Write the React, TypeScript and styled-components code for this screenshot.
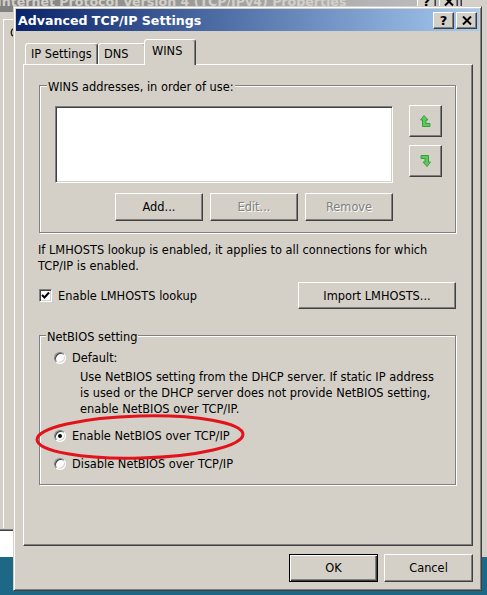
import React from "react";
import styled, { createGlobalStyle, css } from "styled-components";

const FONT = `"DejaVu Sans", Verdana, sans-serif`;

const Global = createGlobalStyle`
  html, body { margin: 0; padding: 0; background: #1d6787; }
  body { font-family: ${FONT}; font-size: 11.4px; color: #000; }
  * { box-sizing: border-box; }
`;

const Desktop = styled.div`
  position: relative;
  width: 487px;
  height: 595px;
  overflow: hidden;
  background: linear-gradient(#d4d0c8 0 557px, #1d6787 557px);
`;

const raised = css`
  border: 1px solid;
  border-color: #d4d0c8 #404040 #404040 #d4d0c8;
  box-shadow: inset 1px 1px #fff, inset -1px -1px #808080;
`;

const BackWindow = styled.div`
  position: absolute;
  left: -6px;
  top: -13px;
  width: 468px;
  height: 544px;
  background: #d4d0c8;
  ${raised};
  padding: 2px;
  display: flex;
  flex-direction: column;
`;

const BackTitle = styled.div`
  height: 22px;
  flex: none;
  background: linear-gradient(to right, #808080, #c0c0c0);
  color: #d4d0c8;
  font-weight: bold;
  font-size: 12.6px;
  display: flex;
  align-items: center;
  white-space: nowrap;
`;

const BackPanel = styled.div`
  flex: 1;
  margin: 7px 0 0 6px;
  border-top: 1px solid #fff;
  border-left: 1px solid #fff;
  padding: 6px 0 0 6px;
  color: #000;
`;

const BackStrip = styled.div`
  position: absolute;
  left: 0;
  top: 531px;
  width: 20px;
  height: 26px;
  background: #fff;
`;

const Dialog = styled.div`
  position: absolute;
  left: 13px;
  top: 6px;
  width: 469px;
  height: 585px;
  background: #d4d0c8;
  ${raised};
  padding: 2px;
  display: flex;
  flex-direction: column;
`;

const TitleBar = styled.div`
  height: 22px;
  flex: none;
  background: linear-gradient(to right, #0a246a, #a6caf0);
  display: flex;
  align-items: center;
  padding: 0 2px 0 2px;
`;

const TitleText = styled.span`
  color: #fff;
  font-weight: bold;
  font-size: 12.6px;
  white-space: nowrap;
`;

const CapButtons = styled.div<{ $gap?: number }>`
  margin-left: auto;
  display: flex;
  gap: ${(p) => p.$gap ?? 2}px;
`;

const CapBtn = styled.div<{ $w?: number; $h?: number }>`
  width: ${(p) => p.$w ?? 21}px;
  height: ${(p) => p.$h ?? 17}px;
  background: #d4d0c8;
  border: 1px solid;
  border-color: #fff #404040 #404040 #fff;
  box-shadow: inset -1px -1px #808080;
  display: flex;
  align-items: center;
  justify-content: center;
  font-weight: bold;
  font-size: 13px;
  color: #000;
  line-height: 1;
`;

const Body = styled.div`
  flex: 1;
  display: flex;
  flex-direction: column;
  padding: 9px 6px 0 7px;
`;

const TabRow = styled.div`
  height: 24px;
  display: flex;
  align-items: flex-end;
  padding-left: 2px;
`;

const Tab = styled.div<{ $w: number; $active?: boolean }>`
  position: relative;
  width: ${(p) => p.$w}px;
  height: 21px;
  background: #d4d0c8;
  border: 1px solid;
  border-bottom: none;
  border-color: #fff #404040 transparent #fff;
  border-radius: 3px 3px 0 0;
  box-shadow: inset -1px 0 #808080;
  padding: 3px 0 0 5px;
  line-height: 15px;
  white-space: nowrap;
  ${(p) =>
    p.$active &&
    css`
      width: ${p.$w + 4}px;
      height: 26px;
      margin: 0 -2px -1px;
      padding: 4px 0 0 7px;
      line-height: 14px;
      z-index: 1;
    `}
`;

const Panel = styled.div`
  position: relative;
  width: 450px;
  height: 482px;
  flex: none;
  border: 1px solid;
  border-color: #fff #404040 #404040 #fff;
  box-shadow: inset -1px -1px #808080;
  padding: 11px 16px 0 15px;
  display: flex;
  flex-direction: column;
`;

const Group = styled.fieldset<{ $pad: string }>`
  margin: 0;
  min-width: 0;
  padding: ${(p) => p.$pad};
  border: 1px solid #808080;
  box-shadow: inset 1px 1px #fff, 1px 1px #fff;
`;

const Legend = styled.legend`
  margin-left: -8px;
  padding: 4px 1px 0;
  line-height: 14px;
  background: #d4d0c8;
  white-space: nowrap;
`;

const ListRow = styled.div`
  display: flex;
  gap: 16px;
  align-items: flex-start;
`;

const ListBox = styled.div`
  width: 338px;
  height: 77px;
  background: #fff;
  border: 1px solid;
  border-color: #808080 #fff #fff #808080;
  box-shadow: inset 1px 1px #404040, inset -1px -1px #d4d0c8;
`;

const ArrowCol = styled.div`
  display: flex;
  flex-direction: column;
  gap: 8px;
  margin-top: -1px;
`;

const Btn = styled.button<{ $w: number; $h?: number; $default?: boolean }>`
  width: ${(p) => p.$w}px;
  height: ${(p) => p.$h ?? 28}px;
  flex: none;
  font: inherit;
  color: #000;
  background: #d4d0c8;
  padding: 0;
  display: flex;
  align-items: center;
  justify-content: center;
  border: 1px solid;
  border-color: #fff #404040 #404040 #fff;
  box-shadow: inset -1px -1px #808080;
  white-space: nowrap;
  ${(p) =>
    p.$default &&
    css`
      border-color: #000;
      box-shadow: inset 1px 1px #fff, inset -1px -1px #404040, inset -2px -2px #808080;
    `}
  &:disabled {
    color: #808080;
    text-shadow: 1px 1px #fff;
  }
`;

const BtnRow = styled.div`
  width: 338px;
  margin-top: 10px;
  display: flex;
  justify-content: flex-end;
  gap: 7px;
`;

const Info = styled.div`
  margin: 9px 0 0 -1px;
  line-height: 16px;
  white-space: nowrap;
`;

const CheckRow = styled.div`
  margin-top: 8px;
  height: 27px;
  display: flex;
  align-items: center;
  justify-content: space-between;
`;

const CheckLabel = styled.label`
  display: flex;
  align-items: center;
  gap: 6px;
`;

const CheckBox = styled.span`
  width: 13px;
  height: 13px;
  flex: none;
  background: #fff;
  border: 1px solid;
  border-color: #808080 #fff #fff #808080;
  box-shadow: inset 1px 1px #404040, inset -1px -1px #d4d0c8;
  display: flex;
  align-items: center;
  justify-content: center;
`;

const NetGroupWrap = styled.div`
  margin-top: 17px;
`;

const RadioRow = styled.div<{ $mt?: number }>`
  height: 16px;
  margin-top: ${(p) => p.$mt ?? 0}px;
  display: flex;
  align-items: center;
  gap: 6px;
  white-space: nowrap;
`;

const Radio = styled.span<{ $on?: boolean }>`
  position: relative;
  width: 12px;
  height: 12px;
  flex: none;
  border-radius: 50%;
  background: #fff;
  border: 1px solid;
  border-color: #808080 #fff #fff #808080;
  box-shadow: inset 1px 1px #404040, inset -1px -1px #d4d0c8;
  ${(p) =>
    p.$on &&
    css`
      &::after {
        content: "";
        position: absolute;
        left: 3px;
        top: 3px;
        width: 4px;
        height: 4px;
        border-radius: 50%;
        background: #000;
      }
    `}
`;

const Desc = styled.div`
  margin: 3px 0 0 26px;
  line-height: 16px;
  white-space: nowrap;
`;

const Ellipse = styled.svg`
  position: absolute;
  left: 9px;
  top: 347px;
  overflow: visible;
  pointer-events: none;
`;

const Footer = styled.div`
  margin-top: 8px;
  display: flex;
  justify-content: flex-end;
  gap: 6px;
`;

const UpIcon = ({ flip }: { flip?: boolean }) => (
  <svg width="11" height="12" viewBox="0 0 11 12" style={flip ? { transform: "rotate(180deg)" } : undefined}>
    <polygon
      points="4,0.5 8,5 6,5 6,8.5 10,8.5 10,11.5 2.5,11.5 2.5,5 0.5,5"
      fill="#5cc85c"
      stroke="#2f9a3a"
      strokeWidth="0.9"
      strokeLinejoin="round"
    />
  </svg>
);

const Check = () => (
  <svg width="9" height="9" viewBox="0 0 9 9">
    <polyline points="1,4 3.5,6.5 8,1.5" fill="none" stroke="#000" strokeWidth="2" />
  </svg>
);

const CloseX = () => (
  <svg width="10" height="9" viewBox="0 0 10 9">
    <path d="M1 0.5 L9 8.5 M9 0.5 L1 8.5" stroke="#000" strokeWidth="2" />
  </svg>
);

export default function App() {
  return (
    <Desktop>
      <Global />
      <BackWindow>
        <BackTitle>
          Internet Protocol Version 4 (TCP/IPv4) Properties
          <CapButtons $gap={3} style={{ paddingRight: 1 }}>
            <CapBtn $w={19} $h={16}>?</CapBtn>
            <CapBtn $w={19} $h={16}>
              <CloseX />
            </CapBtn>
          </CapButtons>
        </BackTitle>
        <BackPanel>Connection</BackPanel>
      </BackWindow>
      <BackStrip />
      <Dialog>
        <TitleBar>
          <TitleText>Advanced TCP/IP Settings</TitleText>
          <CapButtons>
            <CapBtn>?</CapBtn>
            <CapBtn>
              <CloseX />
            </CapBtn>
          </CapButtons>
        </TitleBar>
        <Body>
          <TabRow>
            <Tab $w={73}>IP Settings</Tab>
            <Tab $w={48}>DNS</Tab>
            <Tab $w={48} $active>
              WINS
            </Tab>
          </TabRow>
          <Panel>
            <Group $pad="12px 13px 11px 15px">
              <Legend>WINS addresses, in order of use:</Legend>
              <ListRow>
                <ListBox />
                <ArrowCol>
                  <Btn $w={33} $h={32}>
                    <UpIcon />
                  </Btn>
                  <Btn $w={33} $h={32}>
                    <UpIcon flip />
                  </Btn>
                </ArrowCol>
              </ListRow>
              <BtnRow>
                <Btn $w={88}>Add...</Btn>
                <Btn $w={88} disabled>
                  Edit...
                </Btn>
                <Btn $w={88} disabled>
                  Remove
                </Btn>
              </BtnRow>
            </Group>
            <Info>
              If LMHOSTS lookup is enabled, it applies to all connections for which
              <br />
              TCP/IP is enabled.
            </Info>
            <CheckRow>
              <CheckLabel>
                <CheckBox>
                  <Check />
                </CheckBox>
                Enable LMHOSTS lookup
              </CheckLabel>
              <Btn $w={158} $h={27}>
                Import LMHOSTS...
              </Btn>
            </CheckRow>
            <NetGroupWrap>
              <Group $pad="6px 13px 12px 14px">
                <Legend>NetBIOS setting</Legend>
                <RadioRow>
                  <Radio />
                  Default:
                </RadioRow>
                <Desc>
                  Use NetBIOS setting from the DHCP server. If static IP address
                  <br />
                  is used or the DHCP server does not provide NetBIOS setting,
                  <br />
                  enable NetBIOS over TCP/IP.
                </Desc>
                <RadioRow $mt={11}>
                  <Radio $on />
                  Enable NetBIOS over TCP/IP
                </RadioRow>
                <RadioRow $mt={12}>
                  <Radio />
                  Disable NetBIOS over TCP/IP
                </RadioRow>
              </Group>
            </NetGroupWrap>
            <Ellipse width="214" height="50" viewBox="0 0 214 50">
              <ellipse
                cx="107"
                cy="25"
                rx="103"
                ry="21"
                fill="none"
                stroke="#e3131b"
                strokeWidth="3"
                transform="rotate(-1.5 107 25)"
              />
            </Ellipse>
          </Panel>
          <Footer>
            <Btn $w={89} $default>
              OK
            </Btn>
            <Btn $w={89}>Cancel</Btn>
          </Footer>
        </Body>
      </Dialog>
    </Desktop>
  );
}
